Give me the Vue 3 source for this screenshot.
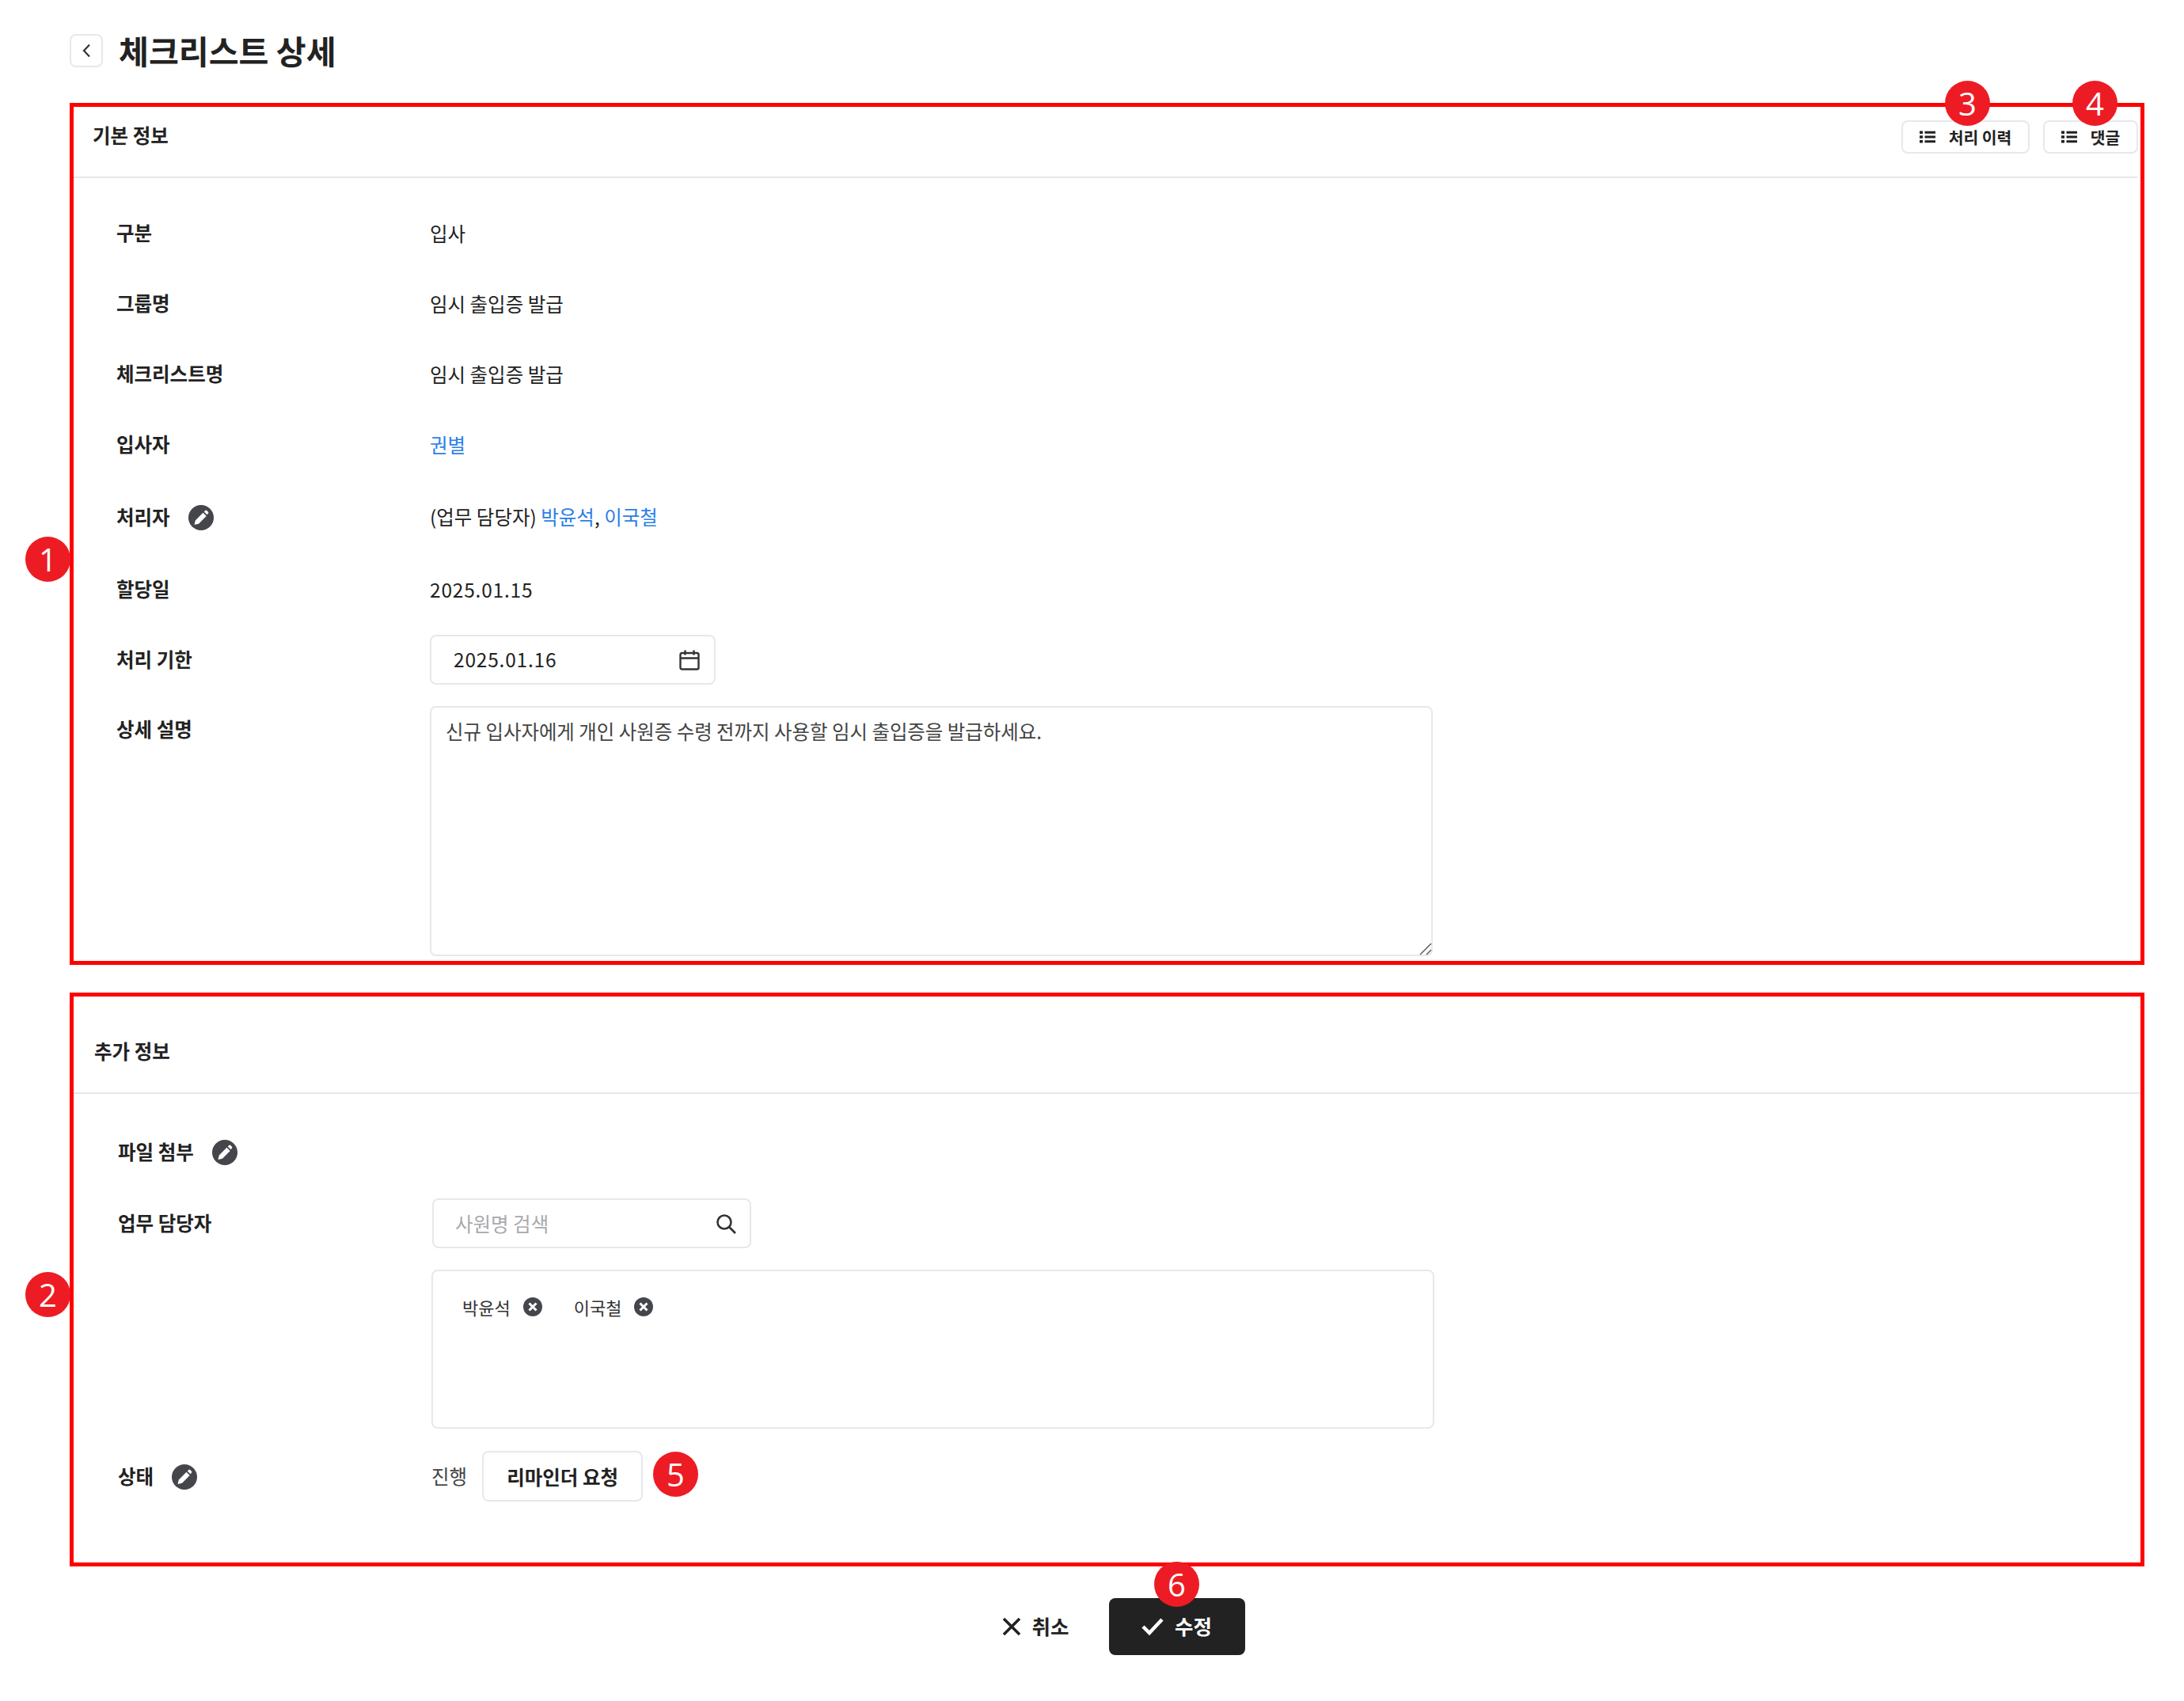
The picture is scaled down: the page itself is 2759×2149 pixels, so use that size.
<script setup>
const basicRows = [
  { label: '구분', value: '입사' },
  { label: '그룹명', value: '임시 출입증 발급' },
  { label: '체크리스트명', value: '임시 출입증 발급' },
]
const badges = [
  { n: 1, cls: 'b1' }, { n: 2, cls: 'b2' }, { n: 3, cls: 'b3' },
  { n: 4, cls: 'b4' }, { n: 5, cls: 'b5' }, { n: 6, cls: 'b6' },
]
const tags = ['박윤석', '이국철']
</script>

<template>
  <div class="page">
    <header class="page-head">
      <button class="back" type="button" aria-label="뒤로">
        <svg width="14" height="22" viewBox="0 0 14 22" fill="none"><path d="M11 3.500 4 11l7 7.500" stroke="#333" stroke-width="2.200"/></svg>
      </button>
      <h1>체크리스트 상세</h1>
    </header>

    <section class="card first">
      <div class="card-head">
        <h2>기본 정보</h2>
        <div class="head-actions">
          <button class="mini w1" type="button">
            <svg class="list" width="20" height="16" viewBox="0 0 20 16"><path d="M0 .5h4v3.500H0zM0 6.250h4v3.500H0zM0 12h4v3.500H0zM6.500 .75h13.500v3H6.500zM6.500 6.500h13.500v3H6.500zM6.500 12.250h13.500v3H6.500z" fill="#222"/></svg>
            <span>처리 이력</span>
          </button>
          <button class="mini w2" type="button">
            <svg class="list" width="20" height="16" viewBox="0 0 20 16"><path d="M0 .5h4v3.500H0zM0 6.250h4v3.500H0zM0 12h4v3.500H0zM6.500 .75h13.500v3H6.500zM6.500 6.500h13.500v3H6.500zM6.500 12.250h13.500v3H6.500z" fill="#222"/></svg>
            <span>댓글</span>
          </button>
        </div>
      </div>
      <div class="rows">
        <div v-for="r in basicRows" :key="r.label" class="row">
          <div class="label">{{ r.label }}</div>
          <div class="value">{{ r.value }}</div>
        </div>
        <div class="row">
          <div class="label">입사자</div>
          <div class="value"><a class="link">권별</a></div>
        </div>
        <div class="row tall">
          <div class="label">처리자
            <svg class="pencil" width="32" height="32" viewBox="0 0 32 32"><circle cx="16" cy="16" r="16" fill="#45464c"/><path d="M7.500 25l1.300-5.500L18.500 9.800l4.200 4.200L13 23.700zM19.800 8.500l1.400-1.400a1.500 1.500 0 0 1 2.100 0l1.600 1.600a1.500 1.500 0 0 1 0 2.100L23.500 12.200z" fill="#fff"/></svg>
          </div>
          <div class="value">(업무 담당자) <a class="link">박윤석</a>, <a class="link">이국철</a></div>
        </div>
        <div class="row">
          <div class="label">할당일</div>
          <div class="value num">2025.01.15</div>
        </div>
        <div class="row">
          <div class="label">처리 기한</div>
          <div class="value">
            <div class="field date">
              <span class="num date-text">2025.01.16</span>
              <svg width="26" height="26" viewBox="0 0 26 26" fill="none" stroke="#333" stroke-width="2.400"><rect x="1.500" y="4" width="23" height="20.500" rx="2"/><path d="M1.500 10.500h23M7.500 0.500v6M18.500 0.500v6"/></svg>
            </div>
          </div>
        </div>
        <div class="row top">
          <div class="label">상세 설명</div>
          <div class="value">
            <div class="desc-wrap">
              <textarea class="desc" readonly>신규 입사자에게 개인 사원증 수령 전까지 사용할 임시 출입증을 발급하세요.</textarea>
              <svg class="grip" width="16" height="16" viewBox="0 0 16 16" fill="none" stroke="#666" stroke-width="1.600"><path d="M1 15 15 1M9 15l6-6"/></svg>
            </div>
          </div>
        </div>
      </div>
    </section>

    <section class="card second">
      <div class="card-head">
        <h2>추가 정보</h2>
      </div>
      <div class="rows">
        <div class="row file">
          <div class="label">파일 첨부
            <svg class="pencil" width="32" height="32" viewBox="0 0 32 32"><circle cx="16" cy="16" r="16" fill="#45464c"/><path d="M7.500 25l1.300-5.500L18.500 9.800l4.200 4.200L13 23.700zM19.800 8.500l1.400-1.400a1.500 1.500 0 0 1 2.100 0l1.600 1.600a1.500 1.500 0 0 1 0 2.100L23.500 12.200z" fill="#fff"/></svg>
          </div>
          <div class="value"></div>
        </div>
        <div class="row">
          <div class="label">업무 담당자</div>
          <div class="value">
            <div class="field search">
              <input class="search-input" type="text" placeholder="사원명 검색" />
              <svg width="26" height="26" viewBox="0 0 26 26" fill="none" stroke="#333" stroke-width="2.600"><circle cx="11" cy="11" r="8.500"/><path d="M17 17l8 8"/></svg>
            </div>
          </div>
        </div>
        <div class="row top tags-row">
          <div class="label"></div>
          <div class="value">
            <div class="tags">
              <span v-for="t in tags" :key="t" class="tag">{{ t }}
                <svg width="24" height="24" viewBox="0 0 24 24"><circle cx="12" cy="12" r="12" fill="#45464c"/><path d="M7.500 7.500l9 9M16.500 7.500l-9 9" stroke="#fff" stroke-width="3"/></svg>
              </span>
            </div>
          </div>
        </div>
        <div class="row status">
          <div class="label">상태
            <svg class="pencil" width="32" height="32" viewBox="0 0 32 32"><circle cx="16" cy="16" r="16" fill="#45464c"/><path d="M7.500 25l1.300-5.500L18.500 9.800l4.200 4.200L13 23.700zM19.800 8.500l1.400-1.400a1.500 1.500 0 0 1 2.100 0l1.600 1.600a1.500 1.500 0 0 1 0 2.100L23.500 12.200z" fill="#fff"/></svg>
          </div>
          <div class="value status-value">
            <span>진행</span>
            <button class="remind" type="button">리마인더 요청</button>
          </div>
        </div>
      </div>
    </section>

    <footer class="actions">
      <button class="btn ghost" type="button">
        <svg width="24" height="24" viewBox="0 0 24 24" fill="none" stroke="#222" stroke-width="3.600"><path d="M2 2l20 20M22 2L2 22"/></svg>
        <span class="btn-text">취소</span>
      </button>
      <button class="btn solid" type="button">
        <svg width="28" height="22" viewBox="0 0 28 22" fill="none" stroke="#fff" stroke-width="4.500"><path d="M2 11l8 8L26 2"/></svg>
        <span class="btn-text">수정</span>
      </button>
    </footer>

    <span v-for="b in badges" :key="b.n" class="badge" :class="b.cls">{{ b.n }}</span>
  </div>
</template>

<style>
html, body { margin: 0; background: #fff; }
</style>

<style scoped>
.page {
  position: relative;
  box-sizing: border-box;
  width: 2759px;
  height: 2149px;
  padding: 43px 50px 0 88px;
  background: #fff;
  color: #222;
  font-family: "Noto Sans CJK KR", "Noto Sans", sans-serif;
  font-size: 24.5px;
}
button { font-family: inherit; color: inherit; background: #fff; cursor: pointer; }

.page-head { display: flex; align-items: center; gap: 20px; height: 42px; margin-bottom: 45px; }
.back {
  box-sizing: border-box; width: 42px; height: 42px; padding: 0;
  display: flex; align-items: center; justify-content: center;
  border: 2px solid #e8e8ec; border-radius: 8px;
}
h1 { margin: -3px 0 0; font-size: 41.2px; font-weight: 700; line-height: 42px; letter-spacing: 0; }
h2 { margin: 0; font-size: 24.5px; font-weight: 700; line-height: 36px; }

.card { border: 5px solid #f00; }
.card.first { height: 1089px; box-sizing: border-box; margin-bottom: 35px; }
.card.second { height: 725px; box-sizing: border-box; margin-bottom: 40px; }

.card-head {
  box-sizing: border-box;
  display: flex; justify-content: space-between;
  margin-right: 3px;
  border-bottom: 2px solid #e8e8ec;
}
.first .card-head { height: 90px; padding: 17px 0 0 24px; align-items: flex-start; }
.first h2 { margin-top: 1px; }
.second .card-head { height: 123px; padding: 51px 0 0 26px; margin-right: 0; }

.head-actions { display: flex; gap: 17px; }
.mini {
  box-sizing: border-box; height: 42px; padding: 0;
  display: flex; align-items: center; justify-content: center; gap: 17px;
  border: 2px solid #e8e8ec; border-radius: 8px;
  font-size: 20.4px; font-weight: 700;
}
.w1 { width: 162px; }
.w2 { width: 120px; }

.rows { display: flex; flex-direction: column; gap: 26px; }
.first .rows { padding: 38px 0 0 54px; }
.second .rows { padding: 41px 0 0 56px; }

.row { display: grid; grid-template-columns: 396px 1fr; align-items: center; min-height: 63px; }
.second .row { grid-template-columns: 397px 1fr; }
.row.tall { min-height: 68px; }
.row.top { align-items: start; }
.row.file { margin-bottom: 1px; }
.row.tags-row { margin-top: 1px; }
.row.status { min-height: 64px; margin-top: 2px; }

.label { display: flex; align-items: center; gap: 23px; font-weight: 700; line-height: 36px; }
.first .row:not(.top) .label { margin-top: -2px; }
.first .row.tall .label { margin-top: 0; }
.row.top .label { padding-top: 12px; }
.pencil { margin-top: 2px; }
.value { line-height: 36px; }
.num { letter-spacing: 0.8px; }
.date-text { margin-top: -2px; }
.link { color: #2b7fe8; }

.field {
  box-sizing: border-box; display: flex; align-items: center; justify-content: space-between;
  height: 63px; border: 2px solid #e8e8ec; border-radius: 8px; background: #fff;
}
.date { width: 361px; padding: 0 18px 0 28px; }
.search { width: 403px; padding: 0 17px 0 27px; margin-top: 1px; }
.search-input {
  flex: 1; min-width: 0; border: 0; outline: 0; padding: 0;
  font-family: inherit; font-size: 24.5px; color: #222; background: transparent;
}
.search-input::placeholder { color: #a9a9ad; opacity: 1; }

.desc-wrap { position: relative; width: 1267px; height: 316px; margin-top: 1px; }
.desc {
  display: block; box-sizing: border-box; width: 100%; height: 100%; margin: 0;
  padding: 12px 18px; border: 2px solid #e8e8ec; border-radius: 8px; outline: 0;
  font-family: inherit; font-size: 24.45px; line-height: 36px; color: #444;
  resize: none;
}
.grip { position: absolute; right: 1px; bottom: 1px; }

.tags {
  box-sizing: border-box; width: 1267px; height: 201px; padding: 27px 37px;
  margin-left: -1px;
  display: flex; align-items: flex-start; gap: 40px;
  border: 2px solid #e8e8ec; border-radius: 8px;
}
.tag { display: inline-flex; align-items: center; gap: 16px; font-size: 22px; line-height: 36px; color: #333; }

.status-value { display: flex; align-items: center; gap: 19px; color: #444; margin-left: -1px; }
.remind {
  box-sizing: border-box; width: 203px; height: 64px; padding: 0;
  border: 2px solid #e8e8ec; border-radius: 8px;
  font-size: 24.5px; font-weight: 700; color: #222;
}

.actions { display: flex; justify-content: center; gap: 7px; }
.btn {
  box-sizing: border-box; height: 72px; padding: 0;
  display: flex; align-items: center; justify-content: center; gap: 14px;
  border: 0; border-radius: 8px; font-size: 25.5px; font-weight: 700;
}
.btn-text { margin-top: -3px; }
.ghost { width: 167px; background: transparent; color: #222; }
.solid { width: 172px; background: #222; color: #fff; margin-left: 2px; }

.badge {
  position: absolute; width: 57px; height: 57px; border-radius: 50%;
  display: flex; align-items: center; justify-content: center;
  background: #ed1c24; color: #fff;
  font-family: "Open Sans", sans-serif; font-size: 40px; line-height: 1;
}
.b1 { left: 32px; top: 678px; }
.b2 { left: 32px; top: 1607px; }
.b3 { left: 2457px; top: 102px; }
.b4 { left: 2618px; top: 102px; }
.b5 { left: 825px; top: 1834px; }
.b6 { left: 1458px; top: 1973px; }
</style>
